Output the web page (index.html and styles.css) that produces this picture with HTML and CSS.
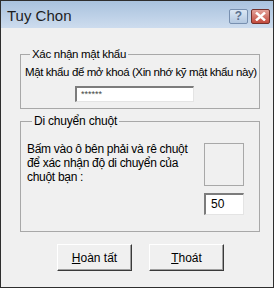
FILE: index.html
```html
<!DOCTYPE html>
<html>
<head>
  <title>Tuy Chon</title>
  <meta charset="UTF-8">
  <link rel="stylesheet" href="styles.css">
</head>
<body>
  <div class="window">
    <div class="titlebar">
      <span class="title">Tuy Chon</span>
      <div class="caption-buttons">
        <span class="cap-btn help">?</span>
        <span class="cap-btn close">
          <svg width="11" height="9" viewBox="0 0 11 9">
            <path d="M1 0.5 L10 8.5 M10 0.5 L1 8.5" stroke="#fff" stroke-width="2.4"/>
          </svg>
        </span>
      </div>
    </div>

    <div class="client">
      <fieldset class="group group-pass">
        <legend class="tight">Xác nhận mật khẩu</legend>
        <div class="hint">Mật khẩu để mở khoá (Xin nhớ kỹ mật khẩu này)</div>
        <div class="field pass">******</div>
      </fieldset>

      <fieldset class="group group-mouse">
        <legend>Di chuyển chuột</legend>
        <div class="mouse-row">
          <div class="mouse-text">Bấm vào ô bên phải và rê chuột<br>để xác nhận độ di chuyển của<br>chuột bạn :</div>
          <div class="mouse-side">
            <div class="mouse-box"></div>
            <div class="field amount">50</div>
          </div>
        </div>
      </fieldset>

      <div class="actions">
        <span class="button"><u>H</u>oàn tất</span>
        <span class="button"><u>T</u>hoát</span>
      </div>
    </div>
  </div>
</body>
</html>
```

FILE: styles.css
```css
body {
  margin: 0;
  font-family: "Liberation Sans", Arial, sans-serif;
  font-size: 12px;
  color: #000;
  background: #fff;
}
.window {
  width: 272px;
  height: 286px;
  border: 1px solid #2e2e2e;
  background-color: #f0f0f0;
  display: flex;
  flex-direction: column;
}
.titlebar {
  height: 27px;
  display: flex;
  align-items: center;
  justify-content: space-between;
  padding: 0 3px 0 6px;
  background: linear-gradient(#a9c2de, #cddcee);
}
.title {
  font-size: 15px;
  color: #1e1e1e;
  margin-top: 2px;
}
.caption-buttons {
  display: flex;
  gap: 3px;
  margin-top: 3px;
}
.cap-btn {
  width: 17px;
  height: 13px;
  border-radius: 2px;
  display: flex;
  align-items: center;
  justify-content: center;
  font-weight: bold;
  font-size: 12px;
  line-height: 13px;
}
.help {
  border: 1px solid #7890b0;
  background: linear-gradient(#dbe7f4, #b3c8e1);
  color: #5d7290;
}
.close {
  border: 1px solid #74302a;
  background: linear-gradient(#e3a199, #c24a3d);
}
.client {
  padding: 19px 13px 0 19px;
  flex: 1;
}
.group {
  margin: 0;
  border: 1px solid #a8a8a8;
  padding: 0 0 0 4px;
}
.group legend {
  margin-left: 5px;
  padding: 0 2px;
  line-height: 14px;
  letter-spacing: -0.2px;
}
.group legend.tight {
  font-size: 11.5px;
  letter-spacing: -0.3px;
}
.group-pass {
  padding-bottom: 6px;
}
.hint {
  font-size: 11.5px;
  letter-spacing: -0.4px;
  line-height: 14px;
  margin-top: 4px;
  white-space: nowrap;
}
.field {
  background: #fff;
  border-top: 2px solid #7c7c7c;
  border-left: 2px solid #7c7c7c;
  border-right: 1px solid #e4e4e4;
  border-bottom: 1px solid #e4e4e4;
  box-sizing: border-box;
}
.pass {
  width: 119px;
  height: 16px;
  margin: 7px 0 0 50px;
  font-size: 9px;
  line-height: 13px;
  padding-left: 4px;
  color: #444;
}
.group-mouse {
  margin-top: 5px;
  padding: 14px 15px 16px 6px;
}
.mouse-row {
  display: flex;
  justify-content: space-between;
}
.mouse-text {
  line-height: 14px;
  letter-spacing: -0.3px;
  white-space: nowrap;
  margin-top: 0;
}
.mouse-side {
  display: flex;
  flex-direction: column;
  gap: 7px;
  margin-top: 1px;
}
.mouse-box {
  width: 38px;
  height: 41px;
  border: 1px solid #a8a8a8;
}
.amount {
  width: 40px;
  height: 22px;
  line-height: 19px;
  padding-left: 5px;
}
.actions {
  display: flex;
  gap: 17px;
  margin: 12px 0 0 37px;
}
.button {
  width: 75px;
  height: 27px;
  box-sizing: border-box;
  border: 1px solid;
  border-color: #fff #3a3a3a #3a3a3a #fff;
  box-shadow: inset -1px -1px 0 #a0a0a0;
  display: flex;
  align-items: center;
  justify-content: center;
}
```
